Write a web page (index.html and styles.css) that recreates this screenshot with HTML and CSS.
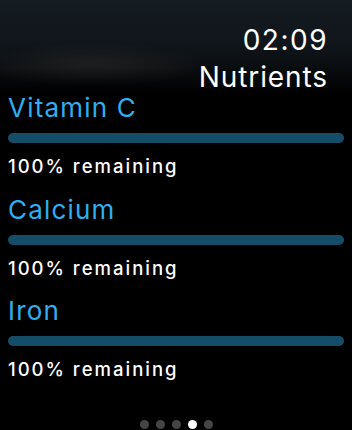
FILE: index.html
```html
<!DOCTYPE html>
<html>
<head>
<meta charset="utf-8">
<link rel="stylesheet" href="styles.css">
</head>
<body>
<div class="screen">
  <header class="header">
    <div class="time">02:09</div>
    <div class="title">Nutrients</div>
  </header>
  <main class="list">
    <section class="nutrient">
      <div class="name">Vitamin C</div>
      <div class="bar"><div class="fill" style="width:100%"></div></div>
      <div class="remaining">100% remaining</div>
    </section>
    <section class="nutrient">
      <div class="name">Calcium</div>
      <div class="bar"><div class="fill" style="width:100%"></div></div>
      <div class="remaining">100% remaining</div>
    </section>
    <section class="nutrient">
      <div class="name">Iron</div>
      <div class="bar"><div class="fill" style="width:100%"></div></div>
      <div class="remaining">100% remaining</div>
    </section>
  </main>
  <nav class="dots">
    <span class="dot"></span>
    <span class="dot"></span>
    <span class="dot"></span>
    <span class="dot active"></span>
    <span class="dot"></span>
  </nav>
</div>
</body>
</html>
```
FILE: styles.css
```css
html, body {
  margin: 0;
  padding: 0;
  background: #000;
}
.screen {
  width: 352px;
  height: 430px;
  overflow: hidden;
  background: #000;
  font-family: Inter, "Liberation Sans", sans-serif;
  color: #fff;
}
.header {
  height: 93px;
  box-sizing: border-box;
  padding: 23px 24px 0 0;
  text-align: right;
  background:
    radial-gradient(ellipse 120px 22px at 92px 64px, rgba(52, 50, 48, 0.45), rgba(40, 40, 40, 0) 100%),
    linear-gradient(to bottom, #141b21 0%, #10161b 45%, #0a0d10 72%, #000 100%);
}
.time {
  font-size: 28px;
  line-height: 34px;
  letter-spacing: 1.5px;
  font-weight: 400;
}
.title {
  font-size: 28px;
  line-height: 40px;
  letter-spacing: 0.9px;
  font-weight: 400;
}
.list {
  display: flex;
  flex-direction: column;
}
.nutrient {
  padding: 0 8px 17.5px 8px;
  display: flex;
  flex-direction: column;
}
.name {
  font-size: 26px;
  line-height: 30px;
  color: #2eaff0;
  letter-spacing: 1.2px;
}
.bar {
  margin-top: 10px;
  height: 10px;
  border-radius: 5px;
  background: #0f3a4f;
  overflow: hidden;
}
.fill {
  height: 100%;
  background: #154d68;
  border-radius: 5px;
}
.remaining {
  margin-top: 12px;
  font-size: 18.5px;
  line-height: 22px;
  font-weight: 500;
  letter-spacing: 2px;
}
.dots {
  margin-top: 22px;
  display: flex;
  justify-content: center;
  gap: 7px;
}
.dot {
  width: 9px;
  height: 9px;
  border-radius: 50%;
  background: #454545;
}
.dot.active {
  background: #fff;
}
```
